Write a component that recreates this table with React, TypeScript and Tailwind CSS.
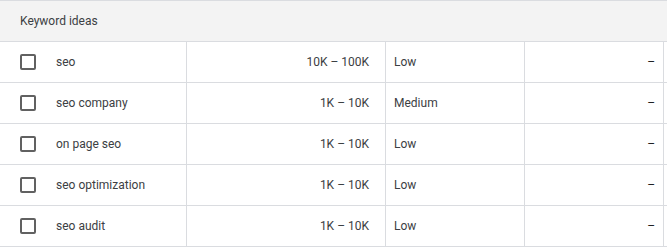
import React from "react";

const rows = [
  { keyword: "seo", volume: "10K – 100K", competition: "Low" },
  { keyword: "seo company", volume: "1K – 10K", competition: "Medium" },
  { keyword: "on page seo", volume: "1K – 10K", competition: "Low" },
  { keyword: "seo optimization", volume: "1K – 10K", competition: "Low" },
  { keyword: "seo audit", volume: "1K – 10K", competition: "Low" },
];

export default function App() {
  return (
    <div className="w-[667px] h-[249px] bg-white overflow-hidden text-[#3c4043] font-['Roboto',sans-serif]">
      {/* Header */}
      <div className="h-[42px] bg-[#f3f3f3] border-t border-b border-[#dadce0] flex items-center pl-5 text-[12px] text-[#3c4043]">
        Keyword ideas
      </div>

      {rows.map((r, i) => (
        <div key={i} className="flex h-[41px] border-b border-[#dadce0] text-[12px]">
          <div className="w-[187px] flex items-center border-r border-[#dadce0]">
            <div className="ml-5 w-4 h-4 border-2 border-[#616161] rounded-[2px]" />
            <span className="ml-5">{r.keyword}</span>
          </div>
          <div className="w-[199px] flex items-center justify-end pr-4 border-r border-[#dadce0]">
            {r.volume}
          </div>
          <div className="w-[139px] flex items-center pl-2 border-r border-[#dadce0]">
            {r.competition}
          </div>
          <div className="w-[139px] flex items-center justify-end pr-2 border-r border-[#dadce0] text-[#202124]">
            –
          </div>
        </div>
      ))}
    </div>
  );
}
